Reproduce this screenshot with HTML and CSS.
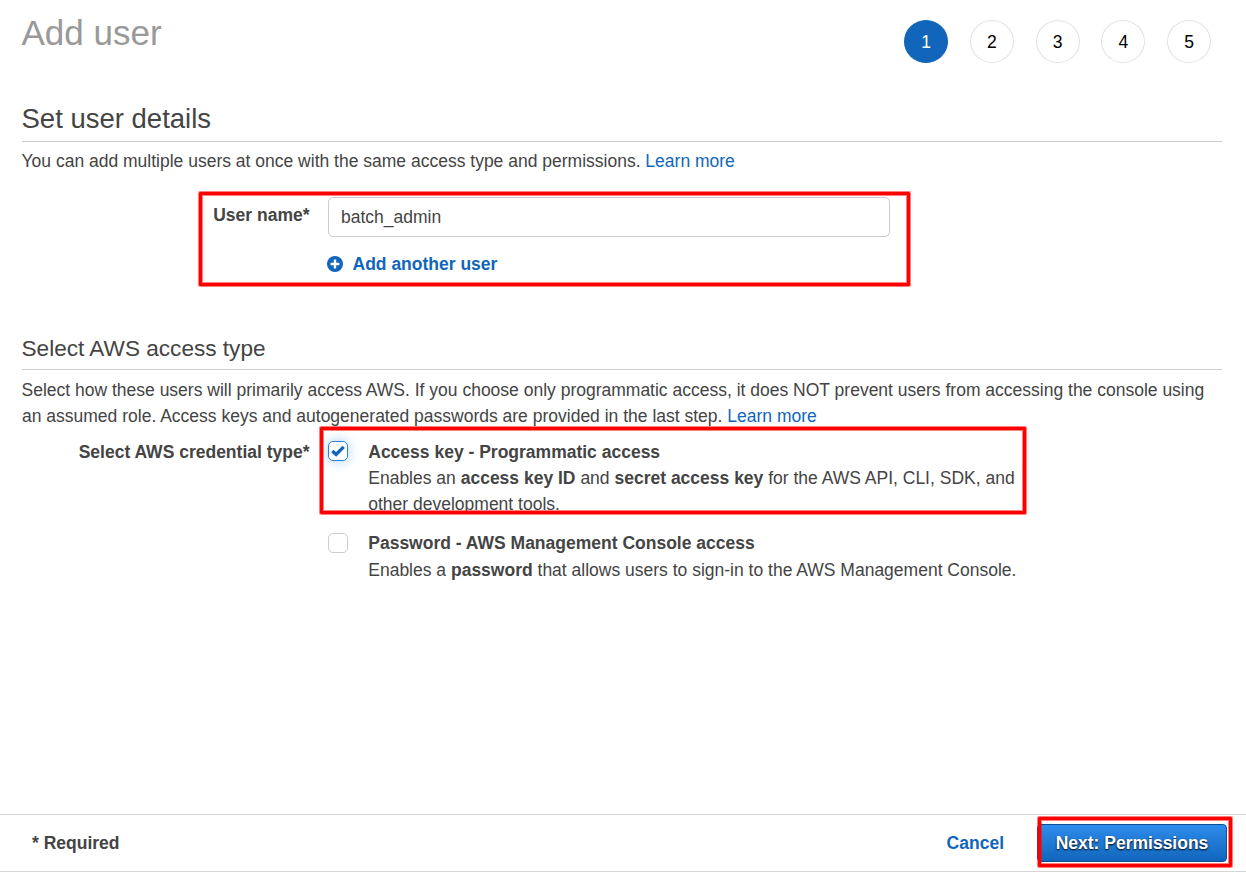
FILE: index.html
```html
<!DOCTYPE html>
<html lang="en">
<head>
<meta charset="utf-8">
<title>Add user</title>
<link rel="stylesheet" href="styles.css">
</head>
<body>
<main class="wizard">
  <header class="wizard-header">
    <h1 class="page-title">Add user</h1>
    <ol class="steps">
      <li class="step step-active">1</li>
      <li class="step">2</li>
      <li class="step">3</li>
      <li class="step">4</li>
      <li class="step">5</li>
    </ol>
  </header>

  <section class="details">
    <h2 class="section-title">Set user details</h2>
    <p class="intro">You can add multiple users at once with the same access type and permissions. <a class="link" href="#">Learn more</a></p>
    <div class="form-row user-row">
      <label class="label user-label" for="user">User name*</label>
      <div class="field">
        <input class="input" id="user" type="text" value="batch_admin">
        <a class="add-user" href="#">
          <svg class="plus" viewBox="0 0 16 16"><circle cx="8" cy="8" r="8" fill="#1166bb"/><path d="M8 3.6v8.8M3.6 8h8.8" stroke="#fff" stroke-width="2.4"/></svg>
          <span>Add another user</span>
        </a>
      </div>
      <div class="mark mark-user"></div>
    </div>
  </section>

  <section class="access">
    <h3 class="sub-title">Select AWS access type</h3>
    <p class="intro">Select how these users will primarily access AWS. If you choose only programmatic access, it does NOT prevent users from accessing the console using an assumed role. Access keys and autogenerated passwords are provided in the last step. <a class="link" href="#">Learn more</a></p>
    <div class="form-row">
      <div class="label">Select AWS credential type*</div>
      <div class="options">
        <div class="option">
          <span class="check check-on"><svg class="tick" viewBox="0 0 14 12"><path d="M1.3 6L5.1 9.5L12.7 1.9" fill="none" stroke="#1166bb" stroke-width="3.4"/></svg></span>
          <div class="option-text"><b>Access key - Programmatic access</b><br>Enables an <b>access key ID</b> and <b>secret access key</b> for the AWS API, CLI, SDK, and other development tools.</div>
        </div>
        <div class="option">
          <span class="check check-off"></span>
          <div class="option-text"><b>Password - AWS Management Console access</b><br>Enables a <b>password</b> that allows users to sign-in to the AWS Management Console.</div>
        </div>
      </div>
      <div class="mark mark-key"></div>
    </div>
  </section>
</main>
<footer class="footer">
  <span class="required">* Required</span>
  <a class="cancel" href="#">Cancel</a>
  <div class="next-wrap">
    <button class="next" type="button">Next: Permissions</button>
    <div class="mark mark-next"></div>
  </div>
</footer>
</body>
</html>
```

FILE: styles.css
```css
* { box-sizing: border-box; }
body {
  margin: 0;
  height: 872px;
  display: flex;
  flex-direction: column;
  overflow: hidden;
  background: #fff;
  color: #444;
  font: 17.5px/26.25px "Liberation Sans", Arial, sans-serif;
}
h1, h2, h3, p, ol { margin: 0; padding: 0; font-weight: normal; }
a { color: #1166bb; text-decoration: none; }
.wizard { flex: 1; padding: 0 24px 0 22px; }
.wizard-header { display: flex; justify-content: space-between; height: 99px; padding-right: 11px; }
.page-title { font-size: 35px; line-height: 40px; padding-top: 13px; color: #999; text-indent: -0.5px; }
.steps { display: flex; gap: 21.75px; padding-top: 20px; list-style: none; }
.step {
  width: 44px;
  height: 43px;
  border: 1px solid #e2e2e2;
  border-radius: 50%;
  line-height: 42px;
  text-align: center;
  color: #000;
}
.step-active { background: #1166bb; border-color: #1166bb; color: #fff; }
.section-title { height: 43px; font-size: 27.5px; line-height: 39px; border-bottom: 1px solid #ccc; text-indent: -0.5px; }
.sub-title { height: 37px; font-size: 22.6px; line-height: 32px; border-bottom: 1px solid #ccc; text-indent: -0.5px; }
.intro { padding-top: 6px; text-indent: -0.5px; }
.details { height: 234px; }
.access .intro { padding-top: 7px; }
.form-row { position: relative; display: flex; }
.user-row { padding-top: 23px; }
.label { width: 287.5px; margin-right: 18.5px; text-align: right; font-weight: bold; padding-top: 9px; }
.user-label { padding-top: 5px; }
.input {
  display: block;
  width: 562px;
  height: 40px;
  padding: 0 12px;
  border: 1px solid #ccc;
  border-radius: 5px;
  font: inherit;
  color: #444;
  outline: 0;
}
.add-user { display: flex; align-items: center; gap: 9.5px; margin: 13.5px 0 0 -1px; font-weight: bold; }
.plus { width: 16px; height: 16px; }
.options { padding-top: 9px; }
.option { display: flex; width: 700px; margin-bottom: 13px; }
.option-text { width: 660px; }
.check {
  display: flex;
  align-items: center;
  justify-content: center;
  flex: none;
  width: 20px;
  height: 20px;
  margin: 2px 20.25px 0 0;
  border: 1px solid #ccc;
  border-radius: 5px;
  background: #fff;
}
.check-on { border-color: #2a83d8; box-shadow: 0 0 12px rgba(60, 145, 225, .45); }
.check-off { margin-top: 3px; }
.tick { width: 14px; height: 12px; }
.mark {
  position: absolute;
  border: 3px solid #f00;
  border-radius: 1px;
  box-shadow: 0 0 0 1px rgba(255, 0, 0, .5), inset 0 0 0 1px rgba(255, 0, 0, .5);
  pointer-events: none;
}
.mark-user { left: 177px; top: 18px; width: 711px; height: 94px; }
.mark-key { left: 298px; top: -3px; width: 706px; height: 87px; }
.footer {
  display: flex;
  align-items: center;
  height: 58px;
  padding: 0 19px 0 32px;
  border-top: 1px solid #d5d5d5;
  border-bottom: 1px solid #d5d5d5;
  font-weight: bold;
}
.required { flex: 1; }
.cancel { margin-right: 33px; }
.next-wrap { position: relative; }
.next {
  display: block;
  width: 190px;
  height: 38px;
  padding: 0;
  border: 1px solid #0e4f91;
  border-radius: 4px;
  background: linear-gradient(#2e8cec, #1166bb);
  color: #fff;
  font: inherit;
  text-shadow: 0 1px 2px #000;
}
.mark-next { left: 1px; top: -7px; width: 194px; height: 50px; }
```
